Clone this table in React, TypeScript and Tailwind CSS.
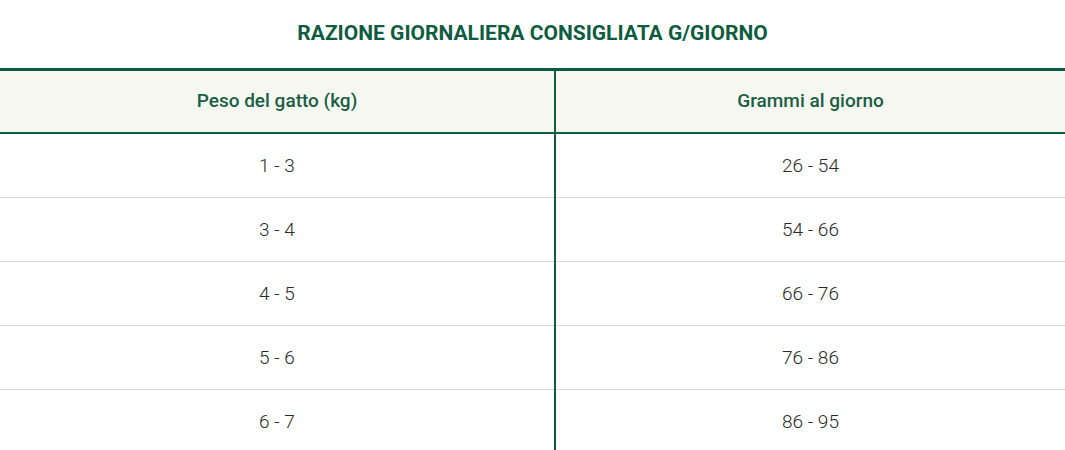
const rows = [
  ['1 - 3', '26 - 54'],
  ['3 - 4', '54 - 66'],
  ['4 - 5', '66 - 76'],
  ['5 - 6', '76 - 86'],
  ['6 - 7', '86 - 95'],
]

export default function App() {
  return (
    <div className="w-[1065px] h-[450px] overflow-hidden bg-white font-['Roboto',sans-serif]">
      <h2 className="h-[68px] flex items-center justify-center text-[21px] font-bold text-[#0d5c3f] uppercase">
        Razione giornaliera consigliata g/giorno
      </h2>
      <table className="w-full border-collapse table-fixed">
        <thead>
          <tr className="bg-[#f6f7f0] border-t-[3px] border-b-[2px] border-[#0d5c3f]">
            <th className="w-[555px] h-[63px] text-[19px] font-medium text-[#1a5e45] border-r-2 border-[#0d5c3f]">
              Peso del gatto (kg)
            </th>
            <th className="h-[63px] text-[19px] font-medium text-[#1a5e45]">Grammi al giorno</th>
          </tr>
        </thead>
        <tbody>
          {rows.map(([kg, g], i) => (
            <tr key={kg} className="border-b border-[#dadada]">
              <td
                className={`${i === 0 ? 'h-[65px]' : 'h-[64px]'} pt-[2px] text-center text-[19px] font-light text-[#2a2a2a] border-r-2 border-[#0d5c3f]`}
              >
                {kg}
              </td>
              <td className="pt-[2px] text-center text-[19px] font-light text-[#2a2a2a]">{g}</td>
            </tr>
          ))}
        </tbody>
      </table>
    </div>
  )
}
